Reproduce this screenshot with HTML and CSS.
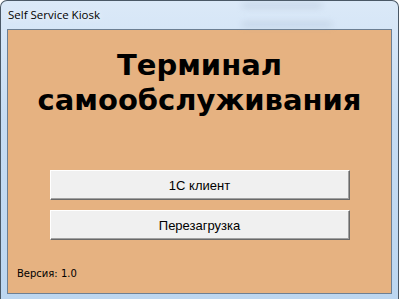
FILE: index.html
```html
<!DOCTYPE html>
<html lang="ru">
<head>
    <meta charset="UTF-8">
    <title>Self Service Kiosk</title>
    <link rel="stylesheet" href="styles.css">
</head>
<body>
    <div class="window">
        <div class="titlebar">
            <span class="caption">Self Service Kiosk</span>
            <div class="glass">
                <span class="smudge smudge-a"></span>
                <span class="smudge smudge-b"></span>
            </div>
        </div>
        <div class="client">
            <h1 class="headline">Терминал<br>самообслуживания</h1>
            <div class="actions">
                <button class="kiosk-btn">1С клиент</button>
                <button class="kiosk-btn">Перезагрузка</button>
            </div>
            <div class="version">Версия: 1.0</div>
        </div>
    </div>
</body>
</html>
```

FILE: styles.css
```css
html, body {
    margin: 0;
    padding: 0;
}
body {
    width: 399px;
    height: 299px;
    overflow: hidden;
    background-color: #ffffff;
}
.window {
    box-sizing: border-box;
    height: 299px;
    border: 1px solid #4a5866;
    border-bottom: none;
    border-radius: 7px 7px 0 0;
    background: linear-gradient(to bottom, #dbe9f8 0%, #c6dcf3 40%, #bcd6f0 100%);
    padding: 0 6px;
}
.titlebar {
    height: 28px;
    display: flex;
    align-items: center;
    position: relative;
}
.caption {
    font-family: "Open Sans", "DejaVu Sans", sans-serif;
    font-size: 11.5px;
    color: #000;
    padding-left: 1px;
    margin-top: -2px;
    text-shadow: 0 0 6px rgba(255, 255, 255, 0.9);
}
.glass {
    position: absolute;
    left: 175px;
    top: 0;
    width: 200px;
    height: 28px;
}
.smudge {
    position: absolute;
    background: rgba(140, 160, 185, 0.25);
    filter: blur(3px);
    border-radius: 3px;
}
.smudge-a {
    left: 60px;
    top: 2px;
    width: 80px;
    height: 5px;
}
.smudge-b {
    left: 60px;
    top: 21px;
    width: 90px;
    height: 5px;
}
.client {
    box-sizing: border-box;
    height: 265px;
    border: 1px solid #6c7f93;
    background-color: #e6b281;
    display: flex;
    flex-direction: column;
}
.headline {
    margin: 18px 0 0;
    text-align: center;
    font-family: "DejaVu Sans", Verdana, sans-serif;
    font-weight: bold;
    font-size: 29px;
    line-height: 35px;
    color: #000;
}
.actions {
    display: flex;
    flex-direction: column;
    align-items: center;
    gap: 10px;
    margin-top: 52px;
}
.kiosk-btn {
    box-sizing: border-box;
    width: 300px;
    height: 30px;
    background-color: #f0f0f0;
    border: 1px solid;
    border-color: #ffffff #696969 #696969 #ffffff;
    box-shadow: inset -1px -1px 0 #a0a0a0;
    font-family: "Liberation Sans", Arial, sans-serif;
    font-size: 13px;
    color: #000;
    padding: 0;
}
.version {
    margin: auto 0 14px 9px;
    font-family: "DejaVu Sans", Tahoma, sans-serif;
    font-size: 10px;
    color: #000;
}
```
